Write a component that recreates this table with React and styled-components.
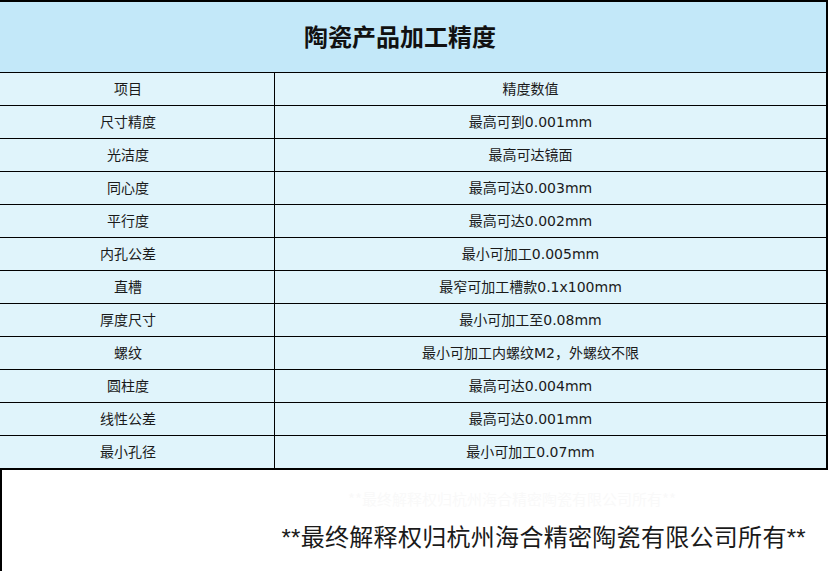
import React from "react";
import styled, { createGlobalStyle } from "styled-components";

const GlobalStyle = createGlobalStyle`
  html, body {
    margin: 0;
    padding: 0;
    background: #ffffff;
  }
  body {
    font-family: "DejaVu Sans", "Noto Sans CJK SC", sans-serif;
    color: #1a1a1a;
  }
`;

const rows = [
  ["尺寸精度", "最高可到0.001mm"],
  ["光洁度", "最高可达镜面"],
  ["同心度", "最高可达0.003mm"],
  ["平行度", "最高可达0.002mm"],
  ["内孔公差", "最小可加工0.005mm"],
  ["直槽", "最窄可加工槽款0.1x100mm"],
  ["厚度尺寸", "最小可加工至0.08mm"],
  ["螺纹", "最小可加工内螺纹M2，外螺纹不限"],
  ["圆柱度", "最高可达0.004mm"],
  ["线性公差", "最高可达0.001mm"],
  ["最小孔径", "最小可加工0.07mm"],
];

const Page = styled.div`
  width: 830px;
  height: 571px;
  display: flex;
  flex-direction: column;
  overflow: hidden;
`;

const Table = styled.div`
  width: 826px;
  border-top: 2px solid #000;
  border-right: 2px solid #000;
  border-bottom: 2px solid #000;
  display: flex;
  flex-direction: column;
`;

const Caption = styled.div`
  height: 71px;
  box-sizing: border-box;
  padding: 0 26px 4px 0;
  background: #c3e8f9;
  border-bottom: 1px solid #000;
  display: flex;
  align-items: center;
  justify-content: center;
  font-family: "Noto Sans CJK SC", sans-serif;
  font-weight: 700;
  font-size: 24px;
  color: #111;
`;

const Row = styled.div`
  display: grid;
  grid-template-columns: 275px 1fr;
  height: 32px;
  background: #e0f4fb;
  border-bottom: ${(p) => (p.$last ? "none" : "1px solid #000")};
`;

const Cell = styled.div`
  display: flex;
  align-items: center;
  justify-content: center;
  box-sizing: border-box;
  padding: 0 ${(p) => (p.$first ? "18px" : "40px")} 2px 0;
  font-family: "DejaVu Sans", "Noto Sans CJK SC", sans-serif;
  font-size: 14px;
  color: #1a1a1a;
  border-right: ${(p) => (p.$first ? "1px solid #000" : "none")};
`;

const Footer = styled.div`
  flex: 1;
  border-left: 2px solid #000;
  display: flex;
  flex-direction: column;
  align-items: flex-end;
  padding-right: 24px;
`;

const Ghost = styled.div`
  margin-top: 18px;
  margin-right: 130px;
  font-family: "Noto Sans CJK SC", sans-serif;
  font-size: 15px;
  color: #f9f9f9;
`;

const Notice = styled.div`
  margin-top: 9px;
  font-family: "Liberation Sans", "Noto Sans CJK SC", sans-serif;
  font-size: 24px;
  letter-spacing: 0.3px;
  color: #1a1a1a;
`;

export default function App() {
  return (
    <>
      <GlobalStyle />
      <Page>
        <Table>
          <Caption>陶瓷产品加工精度</Caption>
          <Row>
            <Cell $first>项目</Cell>
            <Cell>精度数值</Cell>
          </Row>
          {rows.map(([name, value], i) => (
            <Row key={name} $last={i === rows.length - 1}>
              <Cell $first>{name}</Cell>
              <Cell>{value}</Cell>
            </Row>
          ))}
        </Table>
        <Footer>
          <Ghost>**最终解释权归杭州海合精密陶瓷有限公司所有**</Ghost>
          <Notice>**最终解释权归杭州海合精密陶瓷有限公司所有**</Notice>
        </Footer>
      </Page>
    </>
  );
}
